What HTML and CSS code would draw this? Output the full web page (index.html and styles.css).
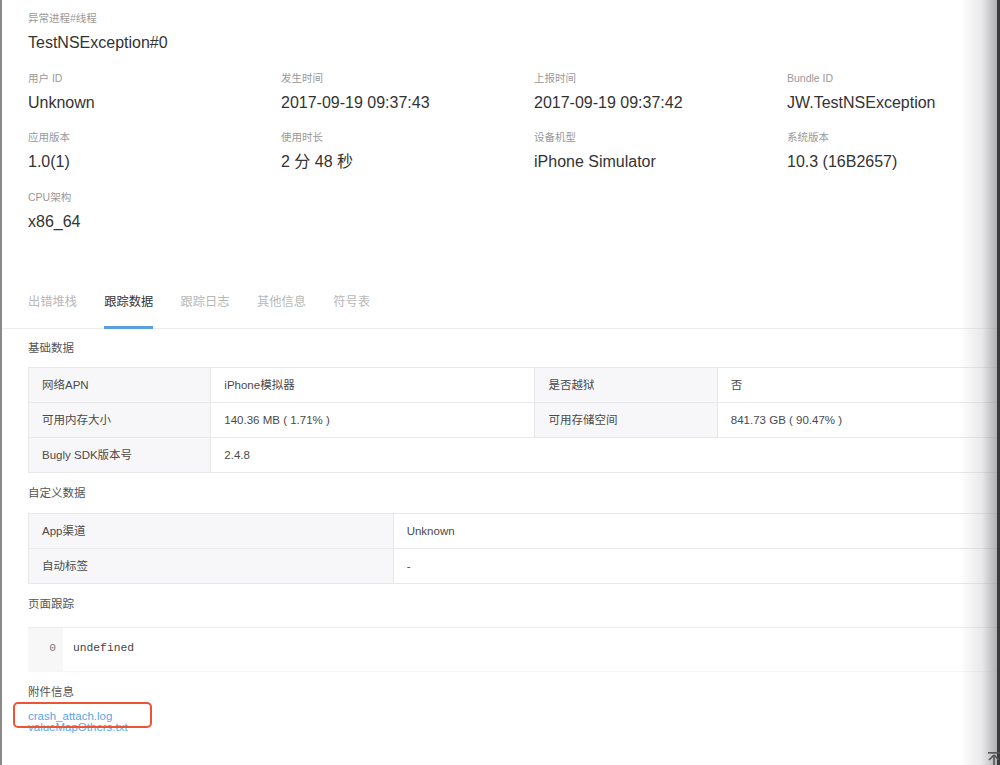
FILE: index.html
```html
<!DOCTYPE html>
<html lang="zh-CN">
<head>
<meta charset="utf-8">
<title>跟踪数据</title>
<link rel="stylesheet" href="styles.css">
</head>
<body>
<div class="page">
  <section class="header">
    <div class="item">
      <div class="label">异常进程#线程</div>
      <div class="value">TestNSException#0</div>
    </div>
    <div class="grid">
      <div class="item"><div class="label">用户 ID</div><div class="value">Unknown</div></div>
      <div class="item"><div class="label">发生时间</div><div class="value">2017-09-19 09:37:43</div></div>
      <div class="item"><div class="label">上报时间</div><div class="value">2017-09-19 09:37:42</div></div>
      <div class="item"><div class="label">Bundle ID</div><div class="value">JW.TestNSException</div></div>
      <div class="item"><div class="label">应用版本</div><div class="value">1.0(1)</div></div>
      <div class="item"><div class="label">使用时长</div><div class="value">2 分 48 秒</div></div>
      <div class="item"><div class="label">设备机型</div><div class="value">iPhone Simulator</div></div>
      <div class="item"><div class="label">系统版本</div><div class="value">10.3 (16B2657)</div></div>
      <div class="item"><div class="label">CPU架构</div><div class="value">x86_64</div></div>
    </div>
  </section>

  <nav class="tabs">
    <span class="tab">出错堆栈</span>
    <span class="tab active">跟踪数据</span>
    <span class="tab">跟踪日志</span>
    <span class="tab">其他信息</span>
    <span class="tab">符号表</span>
  </nav>

  <section class="content">
    <h3 class="heading first">基础数据</h3>
    <table class="kv kv4">
      <colgroup><col class="c18"><col class="c32"><col class="c18"><col class="c32"></colgroup>
      <tr><td class="k">网络APN</td><td>iPhone模拟器</td><td class="k">是否越狱</td><td>否</td></tr>
      <tr><td class="k">可用内存大小</td><td>140.36 MB ( 1.71% )</td><td class="k">可用存储空间</td><td>841.73 GB ( 90.47% )</td></tr>
      <tr><td class="k">Bugly SDK版本号</td><td colspan="3">2.4.8</td></tr>
    </table>

    <h3 class="heading">自定义数据</h3>
    <table class="kv">
      <colgroup><col class="c36"><col class="c64"></colgroup>
      <tr><td class="k">App渠道</td><td>Unknown</td></tr>
      <tr><td class="k">自动标签</td><td>-</td></tr>
    </table>

    <h3 class="heading code-heading">页面跟踪</h3>
    <div class="code">
      <div class="gutter">0</div>
      <div class="line">undefined</div>
    </div>

    <h3 class="heading">附件信息</h3>
    <div class="files">
      <a class="file">crash_attach.log</a>
      <a class="file">valueMapOthers.txt</a>
      <span class="mark"></span>
    </div>
  </section>
</div>
<div class="edge-shadow"></div>
<svg class="to-top" width="14" height="16" viewBox="0 0 14 16">
  <rect x="1" y="2" width="12" height="1.6" fill="#555"/>
  <path d="M7 5 L2 10 M7 5 L12 10 M7 5 V16" stroke="#555" stroke-width="1.6" fill="none"/>
</svg>
</body>
</html>
```
FILE: styles.css
```css
html, body {
  margin: 0;
  padding: 0;
  background: #fff;
  overflow: hidden;
}
body {
  width: 1000px;
  height: 765px;
  position: relative;
  font-family: "Liberation Sans", "Noto Sans CJK SC", sans-serif;
  color: #333;
}
.page {
  width: 998px;
  height: 765px;
  border-left: 2px solid #8a8a8a;
  overflow: hidden;
}
.header {
  padding: 10px 0 0 26px;
  width: 1014px;
}
.item {
  padding-bottom: 15.5px;
}
.label {
  font-size: 10.5px;
  line-height: 16px;
  color: #999;
}
.value {
  margin-top: 6px;
  font-size: 16px;
  line-height: 22px;
  color: #333;
}
.grid {
  display: grid;
  grid-template-columns: repeat(4, 253px);
  row-gap: 0;
}
.tabs {
  display: flex;
  gap: 27.3px;
  margin-top: 43.5px;
  padding-left: 26px;
  border-bottom: 1px solid #ececec;
}
.tab {
  font-size: 12.25px;
  line-height: 20px;
  padding-bottom: 14px;
  border-bottom: 3px solid transparent;
  color: #b8b8b8;
  margin-bottom: -1px;
}
.tab.active {
  color: #333;
  border-bottom-color: #5b9fe0;
}
.content {
  padding: 0 0 0 26px;
}
.heading {
  margin: 0;
  font-weight: normal;
  font-size: 11.5px;
  line-height: 16px;
  color: #555;
  padding: 12px 0 12px;
}
.heading.first {
  padding: 11px 0 11px;
}
.heading.code-heading {
  padding-bottom: 15px;
}
.kv {
  width: 1014px;
  border-collapse: collapse;
  table-layout: fixed;
  font-size: 11.5px;
  color: #4a4a4a;
}
.c18 { width: 18%; }
.c32 { width: 32%; }
.c36 { width: 36%; }
.c64 { width: 64%; }
.kv td {
  border: 1px solid #e8e8ea;
  height: 34px;
  padding: 0 0 0 13px;
  line-height: 16px;
  white-space: nowrap;
}
.kv td.k {
  background: #f7f7f9;
}
.code {
  display: flex;
  width: 1014px;
  height: 43px;
  border-top: 1px solid #ececec;
  border-bottom: 1px solid #f6f6f6;
  font-family: "Liberation Mono", "DejaVu Sans Mono", monospace;
  font-size: 11.3px;
}
.gutter {
  width: 35px;
  box-sizing: border-box;
  background: #f7f7f7;
  color: #777;
  text-align: right;
  padding-right: 7px;
  line-height: 41px;
}
.line {
  padding-left: 10px;
  line-height: 41px;
  color: #444;
}
.files {
  position: relative;
  display: flex;
  flex-direction: column;
  font-size: 11.5px;
  line-height: 11px;
  margin-top: -1px;
}
.file {
  color: #5aa5ea;
  text-decoration: none;
  cursor: pointer;
}
.mark {
  position: absolute;
  left: -15px;
  top: -9px;
  width: 135px;
  height: 22px;
  border: 2px solid #ec5434;
  border-radius: 5px;
}
.edge-shadow {
  position: absolute;
  top: 0;
  right: 0;
  width: 40px;
  height: 765px;
  background: linear-gradient(to right, rgba(200,200,206,0) 0%, rgba(190,190,196,0.35) 55%, rgba(150,150,156,0.75) 92%, #3a3a3a 92.5%, #3a3a3a 100%);
  pointer-events: none;
}
.to-top {
  position: absolute;
  left: 987px;
  top: 750px;
}
```
